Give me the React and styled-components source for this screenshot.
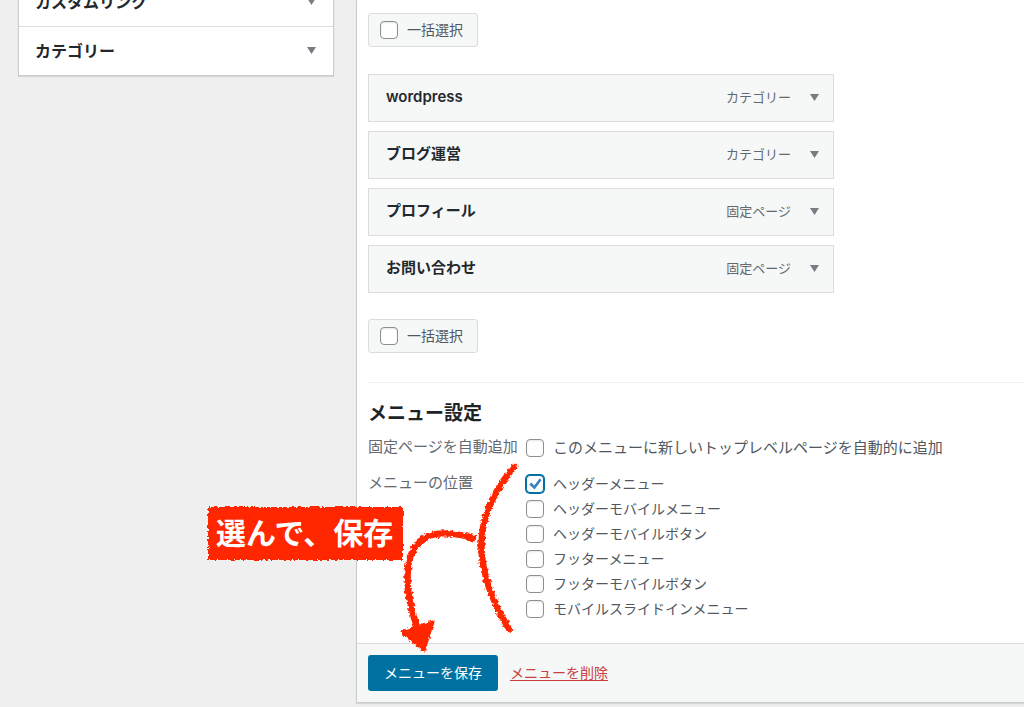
import React, { useState } from 'react'
import styled, { createGlobalStyle, css } from 'styled-components'

const GlobalStyle = createGlobalStyle`
    * {
        box-sizing: border-box;
    }

    body {
        margin: 0;
        background: #efefef;
        color: #50575e;
        font-family: Inter, "Noto Sans CJK JP", sans-serif;
        font-size: 14px;
        line-height: 20px;
    }

    button, input {
        font: inherit;
        margin: 0;
    }
`

const Page = styled.div`
    position: relative;
    display: flex;
    align-items: flex-start;
    gap: 22px;
    min-height: 100vh;
    padding-left: 18px;
    overflow: hidden;
`

// the first section is partly scrolled out of view
const Sidebar = styled.aside`
    flex: 0 0 316px;
    margin-top: -23px;
    background: #fff;
    border: 1px solid #c9cbcd;
    box-shadow: 0 1px 1px rgba(0, 0, 0, 0.1);
`

const SectionButton = styled.button`
    display: flex;
    align-items: center;
    justify-content: space-between;
    width: 100%;
    height: 48px;
    padding: 0 17px 1px 16px;
    border: 0;
    background: none;
    color: #23282d;
    font-size: 16px;
    font-weight: 600;

    & + & {
        height: 49px;
        border-top: 1px solid #dcdcde;
    }
`

const Main = styled.main`
    flex: 1;
    min-width: 0;
    background: #fff;
    border: 1px solid #c9cbcd;
    border-width: 0 0 1px 1px;
    box-shadow: 0 1px 1px rgba(0, 0, 0, 0.1);
`

const Content = styled.div`
    padding: 13px 0 22px 11px;
`

const BulkLabel = styled.label`
    display: flex;
    align-items: center;
    gap: 9px;
    width: max-content;
    min-width: 110px;
    height: 34px;
    padding: 0 11px;
    background: #f6f7f7;
    border: 1px solid #dcdcde;
    border-radius: 3px;
`

const MenuList = styled.ul`
    display: flex;
    flex-direction: column;
    gap: 9px;
    max-width: 466px;
    margin: 27px 0 26px;
    padding: 0;
    list-style: none;
`

const MenuItem = styled.li`
    display: flex;
    align-items: center;
    height: 48px;
    padding: 0 14px 2px 17px;
    background: #f6f7f7;
    border: 1px solid #dcdcde;
`

const ItemTitle = styled.span`
    flex: 1;
    color: #23282d;
    font-size: 15px;
    font-weight: 600;
`

const ItemType = styled.span`
    color: #646970;
    font-size: 13px;
`

const ToggleButton = styled.button`
    display: flex;
    margin-left: 19px;
    padding: 0;
    border: 0;
    background: none;
`

const Settings = styled.section`
    margin-top: 29px;
    padding-top: 19px;
    border-top: 1px solid #f0f0f1;
`

const SettingsTitle = styled.h2`
    margin: 0 0 9px;
    color: #1d2327;
    font-size: 19px;
    line-height: 24px;
    font-weight: 600;
`

const SettingRow = styled.div`
    display: flex;
    gap: 7px;

    & + & {
        margin-top: 11px;
    }
`

const SettingName = styled.div`
    flex: 0 0 151px;
    color: #646970;
    font-size: 15px;
    line-height: 24px;
`

const Options = styled.div`
    flex: 1;
`

const Option = styled.label`
    display: flex;
    align-items: center;
    gap: 9px;
    width: max-content;
    height: 25px;
    font-size: ${props => (props.$large ? '15px' : '14px')};
`

const Box = styled.span`
    display: grid;
    width: 18px;
    height: 18px;

    & > * {
        grid-area: 1 / 1;
    }

    svg {
        pointer-events: none;
    }
`

const BoxInput = styled.input`
    appearance: none;
    width: 18px;
    height: 18px;
    background: #fff;
    border: 1px solid #8c8f94;
    border-radius: 4px;
    box-shadow: inset 0 1px 2px rgba(0, 0, 0, 0.1);

    ${props => props.checked && css`
        border-color: #0071a1;
        box-shadow: 0 0 0 1px #0071a1;
    `}
`

const Footer = styled.footer`
    display: flex;
    align-items: center;
    gap: 12px;
    height: 59px;
    padding-left: 11px;
    background: #f6f7f7;
    border-top: 1px solid #dcdcde;
`

const SaveButton = styled.button`
    height: 36px;
    padding: 0 16px;
    border: 0;
    border-radius: 3px;
    background: #0071a1;
    color: #fff;
`

const DeleteLink = styled.a`
    color: #c9403f;
    text-underline-offset: 2px;
`

const Annotation = styled.div`
    position: absolute;
    left: 200px;
    top: 460px;
    width: 320px;
    height: 200px;
    pointer-events: none;

    svg {
        display: block;
    }
`

const AnnotationText = styled.span`
    position: absolute;
    left: 16px;
    top: 53px;
    color: #fff;
    font-size: 30px;
    line-height: 40px;
    font-weight: 600;
    white-space: nowrap;
`

const Triangle = () => (
    <svg width="9" height="7" viewBox="0 0 9 7" aria-hidden="true">
        <path d="M0 0h9L4.5 7z" fill="#787c82" />
    </svg>
)

const Checkbox = ({ checked, onChange }) => (
    <Box>
        <BoxInput type="checkbox" checked={checked} onChange={onChange} />
        {checked && (
            <svg width="18" height="18" viewBox="0 0 18 18" aria-hidden="true">
                <path d="M3.2 9.4 5.4 7.6l2.8 3L13.6 3.6l2 1.4L8.6 14.6z" fill="#3582c4" />
            </svg>
        )}
    </Box>
)

const RED = '#ff2600'

const Notes = () => (
    <Annotation>
        <svg width="320" height="200" viewBox="200 460 320 200" aria-hidden="true">
            <defs>
                <filter id="crayon" x="-10%" y="-10%" width="120%" height="120%">
                    <feTurbulence type="fractalNoise" baseFrequency="0.35" numOctaves="2" seed="4" />
                    <feDisplacementMap in="SourceGraphic" scale="5" xChannelSelector="R" yChannelSelector="G" />
                </filter>
            </defs>
            <g filter="url(#crayon)">
                <rect x="208" y="507" width="195" height="53" fill={RED} />
                <g fill="none" stroke={RED} strokeWidth="6.5" strokeLinecap="round">
                    <path d="M514 467C472 516 471 566 509 629" />
                    <path d="M473 538C434 527 412 535 408 568C406 590 410 604 416 624" />
                </g>
                <path
                    d="M402 632 433 622 424 650z"
                    fill={RED}
                    stroke={RED}
                    strokeWidth="3"
                    strokeLinejoin="round"
                />
            </g>
        </svg>
        <AnnotationText>選んで、保存</AnnotationText>
    </Annotation>
)

const sections = ['カスタムリンク', 'カテゴリー']

const menuItems = [
    { title: 'wordpress', type: 'カテゴリー' },
    { title: 'ブログ運営', type: 'カテゴリー' },
    { title: 'プロフィール', type: '固定ページ' },
    { title: 'お問い合わせ', type: '固定ページ' },
]

const locations = [
    'ヘッダーメニュー',
    'ヘッダーモバイルメニュー',
    'ヘッダーモバイルボタン',
    'フッターメニュー',
    'フッターモバイルボタン',
    'モバイルスライドインメニュー',
]

const BulkSelect = ({ checked, onChange }) => (
    <BulkLabel>
        <Checkbox checked={checked} onChange={onChange} />
        一括選択
    </BulkLabel>
)

const App = () => {

    const [bulk, setBulk] = useState(false)
    const [autoAdd, setAutoAdd] = useState(false)
    const [selected, setSelected] = useState(['ヘッダーメニュー'])

    const toggleLocation = name => {
        setSelected(selected.includes(name)
            ? selected.filter(item => item !== name)
            : [...selected, name])
    }

    return (
        <>
            <GlobalStyle />
            <Page lang="ja">
                <Sidebar>
                    {sections.map(name => (
                        <SectionButton key={name} type="button">
                            {name}
                            <Triangle />
                        </SectionButton>
                    ))}
                </Sidebar>
                <Main>
                    <Content>
                        <BulkSelect checked={bulk} onChange={() => setBulk(!bulk)} />
                        <MenuList>
                            {menuItems.map(({ title, type }) => (
                                <MenuItem key={title}>
                                    <ItemTitle>{title}</ItemTitle>
                                    <ItemType>{type}</ItemType>
                                    <ToggleButton type="button" aria-label={title}>
                                        <Triangle />
                                    </ToggleButton>
                                </MenuItem>
                            ))}
                        </MenuList>
                        <BulkSelect checked={bulk} onChange={() => setBulk(!bulk)} />
                        <Settings>
                            <SettingsTitle>メニュー設定</SettingsTitle>
                            <SettingRow role="group" aria-labelledby="auto-add">
                                <SettingName id="auto-add">固定ページを自動追加</SettingName>
                                <Options>
                                    <Option $large>
                                        <Checkbox checked={autoAdd} onChange={() => setAutoAdd(!autoAdd)} />
                                        このメニューに新しいトップレベルページを自動的に追加
                                    </Option>
                                </Options>
                            </SettingRow>
                            <SettingRow role="group" aria-labelledby="locations">
                                <SettingName id="locations">メニューの位置</SettingName>
                                <Options>
                                    {locations.map(name => (
                                        <Option key={name}>
                                            <Checkbox
                                                checked={selected.includes(name)}
                                                onChange={() => toggleLocation(name)}
                                            />
                                            {name}
                                        </Option>
                                    ))}
                                </Options>
                            </SettingRow>
                        </Settings>
                    </Content>
                    <Footer>
                        <SaveButton type="button">メニューを保存</SaveButton>
                        <DeleteLink href="#delete">メニューを削除</DeleteLink>
                    </Footer>
                </Main>
                <Notes />
            </Page>
        </>
    )
}

export default App
